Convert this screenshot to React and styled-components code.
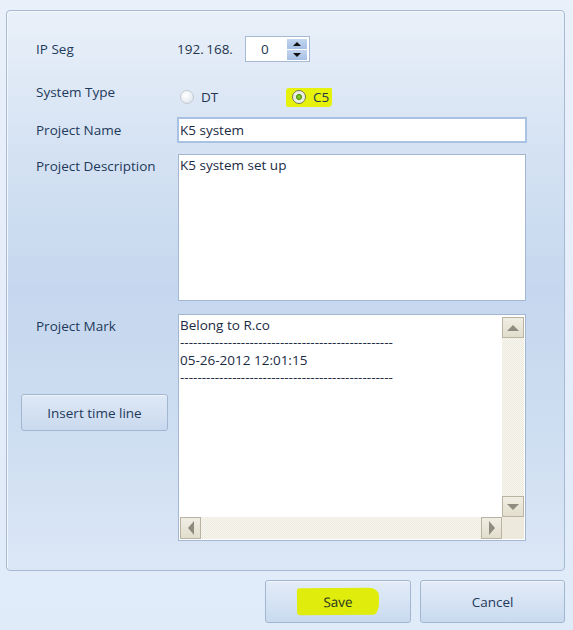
import styled, { createGlobalStyle } from "styled-components";

const GlobalStyle = createGlobalStyle`
  html, body {
    margin: 0;
    padding: 0;
  }
  body {
    width: 573px;
    height: 630px;
    overflow: hidden;
    background: linear-gradient(#e9f0fa, #e0ebf9);
    font-family: "Open Sans", "Noto Sans", sans-serif;
    font-size: 13.5px;
    color: #1e395b;
  }
`;

const Window = styled.div`
  padding: 10px 8px 0 6px;
`;

const Panel = styled.div`
  height: 561px;
  box-sizing: border-box;
  border: 1px solid #a7bad5;
  border-radius: 4px;
  box-shadow: inset 1px 1px 0 #f4f8fd;
  background: linear-gradient(#e9f0f9 0%, #d5e2f3 25%, #c5d7ee 50%, #d0dff2 80%, #dce7f6 100%);
  padding: 25px 0 0 14px;
`;

const Row = styled.div`
  display: flex;
  align-items: ${(p) => (p.$top ? "flex-start" : "center")};
  margin-top: ${(p) => p.$gap || 0}px;
`;

const LabelCol = styled.div`
  width: 156px;
  flex: none;
  display: flex;
  flex-direction: column;
`;

const Label = styled.div`
  padding-left: 15px;
  line-height: 20px;
  padding-top: ${(p) => p.$pad || 0}px;
`;

const Prefix = styled.span`
  width: 68px;
  color: #24364f;
  word-spacing: -1px;
`;

const Spinner = styled.div`
  display: flex;
  align-items: center;
  width: 65px;
  height: 26px;
  box-sizing: border-box;
  border: 1px solid #a6bad6;
  background: #fff;
  padding: 2px;
`;

const SpinValue = styled.span`
  flex: 1;
  padding-left: 13px;
  color: #24364f;
`;

const SpinArrows = styled.div`
  display: flex;
  flex-direction: column;
  gap: 1px;
  width: 20px;
`;

const SpinArrow = styled.div`
  height: 10px;
  background: linear-gradient(#c3d6f0, #a5bfe4);
  display: flex;
  align-items: center;
  justify-content: center;
  &::after {
    content: "";
    border-left: 4px solid transparent;
    border-right: 4px solid transparent;
    ${(p) => (p.$down ? "border-top: 4px solid #111;" : "border-bottom: 4px solid #111;")}
  }
`;

const RadioGroup = styled.div`
  display: flex;
  padding-top: 5px;
`;

const RadioOption = styled.label`
  display: flex;
  align-items: center;
  gap: 7px;
  height: 20px;
  width: ${(p) => p.$width || "auto"};
  color: #24364f;
`;

const Marker = styled.span`
  display: inline-flex;
  align-items: center;
  gap: 7px;
  background: #e6f20c;
  padding: 0 3px 0 6px;
  height: 19px;
  margin-left: -6px;
  border-radius: 3px 1px 4px 2px;
`;

const RadioDot = styled.span`
  width: 14px;
  height: 14px;
  box-sizing: border-box;
  border-radius: 50%;
  border: 1px solid ${(p) => (p.$on ? "#6f7a55" : "#c4cbd3")};
  background: ${(p) =>
    p.$on
      ? "radial-gradient(circle, #9ee03a 0, #4f9a12 2.5px, #e8eadf 3.5px, #f6f7f0 100%)"
      : "radial-gradient(circle at 40% 35%, #ffffff 0, #eef1f5 50%, #d2d8e0 100%)"};
`;

const TextInput = styled.div`
  width: 350px;
  height: 26px;
  box-sizing: border-box;
  border: 2px solid #a9c1e3;
  background: #fff;
  padding: 0 1px;
  line-height: 22px;
  color: #1b2b44;
`;

const TextBox = styled.div`
  width: 348px;
  height: ${(p) => p.$height}px;
  box-sizing: border-box;
  border: 1px solid #a3b7d3;
  background: #fff;
  margin-left: 1px;
  padding: 2px 1px;
  line-height: 17px;
  color: #1b2b44;
`;

const ScrollBox = styled.div`
  width: 348px;
  height: 227px;
  margin-left: 1px;
  box-sizing: border-box;
  border: 1px solid #a3b7d3;
  background: #fff;
  display: grid;
  grid-template-columns: 1fr 22px;
  grid-template-rows: 1fr 22px;
  padding: 2px 1px 1px 1px;
`;

const ScrollText = styled.div`
  line-height: 17.3px;
  color: #1b2b44;
  white-space: pre;
  overflow: hidden;
`;

const Track = styled.div`
  display: flex;
  flex-direction: ${(p) => (p.$vertical ? "column" : "row")};
  justify-content: space-between;
  background-color: #f5f3ea;
  background-image: repeating-conic-gradient(#ece9dd 0 25%, #f8f7f1 0 50%);
  background-size: 2px 2px;
`;

const Corner = styled.div`
  background: #ede9dc;
`;

const ScrollButton = styled.div`
  width: ${(p) => (p.$vertical ? "100%" : "21px")};
  height: ${(p) => (p.$vertical ? "21px" : "100%")};
  box-sizing: border-box;
  border: 1px solid #b9b4a2;
  background: linear-gradient(#f0eee4, #e2decd);
  display: flex;
  align-items: center;
  justify-content: center;
  &::after {
    content: "";
    ${(p) => {
      const c = "#8f8b7f";
      if (p.$dir === "up") return `border-left:6px solid transparent;border-right:6px solid transparent;border-bottom:6px solid ${c};`;
      if (p.$dir === "down") return `border-left:6px solid transparent;border-right:6px solid transparent;border-top:6px solid ${c};`;
      if (p.$dir === "left") return `border-top:7px solid transparent;border-bottom:7px solid transparent;border-right:6px solid ${c};`;
      return `border-top:7px solid transparent;border-bottom:7px solid transparent;border-left:6px solid ${c};`;
    }}
  }
`;

const SideButton = styled.button`
  margin-top: 58px;
  width: 147px;
  height: 37px;
  border: 1px solid #a3b6d1;
  border-radius: 3px;
  background: linear-gradient(#dfe9f6, #c9d9ee);
  box-shadow: inset 0 1px 0 #eef4fb;
  font-family: inherit;
  font-size: 13.5px;
  color: #1e395b;
  padding: 0;
`;

const Footer = styled.div`
  display: flex;
  justify-content: flex-end;
  gap: 9px;
  margin-top: 9px;
`;

const DialogButton = styled.button`
  width: ${(p) => p.$width}px;
  height: 43px;
  border: 1px solid #a3b6d1;
  border-radius: 3px;
  background: linear-gradient(#e3ecf8, #c9daef);
  box-shadow: inset 0 1px 0 #f2f6fc;
  font-family: inherit;
  font-size: 13.5px;
  color: #1e395b;
  display: flex;
  align-items: center;
  justify-content: center;
  padding: 0;
`;

const SaveMarker = styled.span`
  display: inline-flex;
  align-items: center;
  justify-content: center;
  width: 82px;
  height: 27px;
  background: #e0ed0c;
  color: #2a3520;
  border-radius: 4px 10px 6px 3px / 2px 8px 12px 3px;
  transform: rotate(-0.5deg);
`;

const dashes = "-".repeat(49);

export default function App() {
  return (
    <>
      <GlobalStyle />
      <Window>
        <Panel>
          <Row>
            <LabelCol><Label>IP Seg</Label></LabelCol>
            <Prefix>192. 168.</Prefix>
            <Spinner>
              <SpinValue>0</SpinValue>
              <SpinArrows>
                <SpinArrow />
                <SpinArrow $down />
              </SpinArrows>
            </Spinner>
          </Row>

          <Row $top $gap={20}>
            <LabelCol><Label>System Type</Label></LabelCol>
            <RadioGroup>
              <RadioOption $width="112px" style={{ marginLeft: 3 }}>
                <RadioDot />DT
              </RadioOption>
              <RadioOption>
                <Marker><RadioDot $on />C5</Marker>
              </RadioOption>
            </RadioGroup>
          </Row>

          <Row $gap={10}>
            <LabelCol><Label>Project Name</Label></LabelCol>
            <TextInput>K5 system</TextInput>
          </Row>

          <Row $top $gap={11}>
            <LabelCol><Label $pad={2}>Project Description</Label></LabelCol>
            <TextBox $height={147}>K5 system set up</TextBox>
          </Row>

          <Row $top $gap={13}>
            <LabelCol>
              <Label $pad={2}>Project Mark</Label>
              <SideButton>Insert time line</SideButton>
            </LabelCol>
            <ScrollBox>
              <ScrollText>
                {`Belong to R.co\n${dashes}\n05-26-2012 12:01:15\n${dashes}`}
              </ScrollText>
              <Track $vertical>
                <ScrollButton $vertical $dir="up" />
                <ScrollButton $vertical $dir="down" />
              </Track>
              <Track>
                <ScrollButton $dir="left" />
                <ScrollButton $dir="right" />
              </Track>
              <Corner />
            </ScrollBox>
          </Row>
        </Panel>

        <Footer>
          <DialogButton $width={146}><SaveMarker>Save</SaveMarker></DialogButton>
          <DialogButton $width={145}>Cancel</DialogButton>
        </Footer>
      </Window>
    </>
  );
}
